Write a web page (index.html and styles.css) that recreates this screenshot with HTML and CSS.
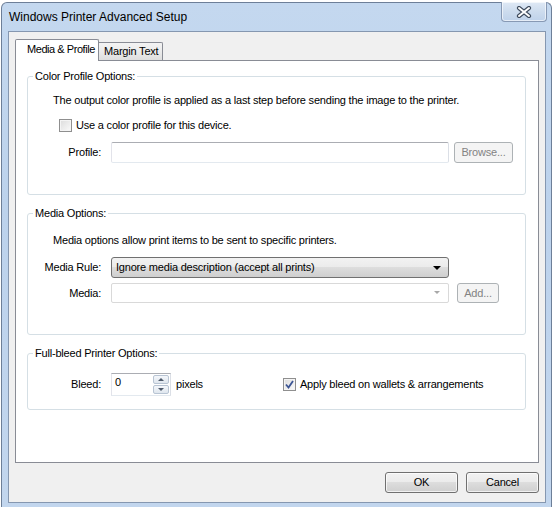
FILE: index.html
```html
<!DOCTYPE html>
<html>
<head>
<meta charset="utf-8">
<title>Windows Printer Advanced Setup</title>
<link rel="stylesheet" href="styles.css">
</head>
<body>
<div class="window">
  <div class="titlebar">
    <span class="title">Windows Printer Advanced Setup</span>
    <span class="close">
      <svg width="16" height="12" viewBox="0 0 16 12">
        <path d="M3 2 L13 10 M13 2 L3 10" stroke="#3d4a5c" stroke-width="4.2" stroke-linecap="round" fill="none"/>
        <path d="M3 2 L13 10 M13 2 L3 10" stroke="#ffffff" stroke-width="2" stroke-linecap="round" fill="none"/>
      </svg>
    </span>
  </div>
  <div class="client">
    <div class="tabs">
      <div class="tab active">Media &amp; Profile</div>
      <div class="tab">Margin Text</div>
    </div>
    <div class="panel">
      <section class="group g1">
        <div class="group-title">Color Profile Options:</div>
        <p class="desc">The output color profile is applied as a last step before sending the image to the printer.</p>
        <label class="check g1-check"><span class="box"></span>Use a color profile for this device.</label>
        <div class="row g1-row">
          <span class="lbl">Profile:</span>
          <span class="textbox"></span>
          <span class="btn disabled browse">Browse...</span>
        </div>
      </section>

      <section class="group g2">
        <div class="group-title">Media Options:</div>
        <p class="desc g2-desc">Media options allow print items to be sent to specific printers.</p>
        <div class="row g2-row1">
          <span class="lbl">Media Rule:</span>
          <span class="combo active-combo">Ignore media description (accept all prints)<span class="arrow"></span></span>
        </div>
        <div class="row g2-row2">
          <span class="lbl">Media:</span>
          <span class="combo disabled-combo"><span class="arrow"></span></span>
          <span class="btn disabled add">Add...</span>
        </div>
      </section>

      <section class="group g3">
        <div class="group-title">Full-bleed Printer Options:</div>
        <div class="row g3-row">
          <span class="lbl">Bleed:</span>
          <span class="spin">
            <span class="spin-val">0</span>
            <span class="spin-btns">
              <span class="spin-btn up"><span class="tri-up"></span></span>
              <span class="spin-btn down"><span class="tri-down"></span></span>
            </span>
          </span>
          <span class="unit">pixels</span>
          <label class="check bleed-check"><span class="box checked">
            <svg width="9" height="9" viewBox="0 0 9 9"><path d="M1 4.5 L3.5 7.5 L8 1" stroke="#3c5594" stroke-width="1.8" fill="none"/></svg>
          </span>Apply bleed on wallets &amp; arrangements</label>
        </div>
      </section>
    </div>
    <div class="buttons">
      <span class="btn push">OK</span>
      <span class="btn push">Cancel</span>
    </div>
  </div>
</div>
</body>
</html>
```

FILE: styles.css
```css
* { box-sizing: border-box; }
html, body { margin: 0; padding: 0; }
body {
  background: #ffffff;
  width: 554px;
  height: 507px;
  overflow: hidden;
  font-family: "Liberation Sans", Arial, sans-serif;
  font-size: 11px;
  letter-spacing: -0.2px;
  color: #000;
}
.window {
  margin: 2px 0 0 1px;
  width: 551px;
  height: 506px;
  border: 1px solid #6d7f98;
  border-bottom: none;
  border-radius: 6px 6px 0 0;
  background: linear-gradient(180deg, #c4d8ef 0%, #bcd2ec 40%, #c2d6ee 100%);
  padding: 0 5px 5px 6px;
  display: flex;
  flex-direction: column;
}
.titlebar {
  height: 28px;
  display: flex;
  align-items: flex-start;
  justify-content: space-between;
}
.title {
  font-family: "Liberation Sans", Arial, sans-serif;
  font-size: 12px;
  letter-spacing: 0;
  line-height: 14px;
  margin-top: 7px;
  margin-left: 1px;
  color: #000;
}
.close {
  margin-top: -1px;
  margin-right: -1px;
  width: 46px;
  height: 20px;
  border: 1px solid #8799b4;
  border-top: none;
  border-radius: 0 0 4px 4px;
  background: linear-gradient(180deg, #dfe9f5 0%, #cddcee 50%, #bfd2ea 100%);
  box-shadow: inset 0 0 0 1px rgba(255,255,255,0.6);
  display: flex;
  align-items: center;
  justify-content: center;
}
.client {
  flex: 1;
  border: 1px solid #8597b0;
  background: #f0f0f0;
  padding: 7px 6px 0 6px;
  display: flex;
  flex-direction: column;
}
.tabs {
  display: flex;
  align-items: flex-end;
  height: 21px;
}
.tab {
  border: 1px solid #898c95;
  border-bottom: none;
  line-height: 13px;
  white-space: nowrap;
}
.tab.active {
  width: 84px;
  height: 22px;
  margin-bottom: -1px;
  background: #ffffff;
  padding: 3px 0 0 11px;
  letter-spacing: -0.45px;
  position: relative;
  z-index: 1;
  border-radius: 2px 2px 0 0;
}
.tab:not(.active) {
  width: 64px;
  height: 18px;
  border-left: none;
  background: linear-gradient(180deg, #f3f3f3 0%, #ebebeb 50%, #dedede 100%);
  padding: 2px 0 0 5px;
  border-radius: 0 2px 0 0;
}
.panel {
  height: 403px;
  border: 1px solid #898c95;
  background: #ffffff;
  padding: 15px 12px 0 11px;
  display: flex;
  flex-direction: column;
  gap: 18px;
}
.group {
  border: 1px solid #d5dfe5;
  border-radius: 3px;
  display: flex;
  flex-direction: column;
}
.g1 { height: 119px; }
.g2 { height: 122px; }
.g3 { height: 57px; }
.group-title {
  align-self: flex-start;
  margin: -7px 0 0 5px;
  padding: 0 2px;
  background: #ffffff;
  line-height: 13px;
}
.desc {
  margin: 11px 0 0 25px;
  line-height: 13px;
}
.g2-desc { margin-top: 14px; }
.check {
  display: flex;
  align-items: center;
  line-height: 13px;
}
.g1-check { margin: 12px 0 0 31px; }
.box {
  width: 13px;
  height: 13px;
  border: 1px solid #8f8f8f;
  background: linear-gradient(135deg, #dcdcdc 0%, #eeeeee 60%, #fbfbfb 100%);
  box-shadow: inset 0 0 0 1px #f4f4f4;
  margin-right: 4px;
  display: flex;
  align-items: center;
  justify-content: center;
  flex: none;
}
.row {
  display: flex;
  align-items: center;
}
.lbl {
  width: 73px;
  text-align: right;
  margin-right: 10px;
  line-height: 13px;
  flex: none;
}
.g1-row { margin-top: 10px; }
.textbox {
  width: 338px;
  height: 21px;
  border: 1px solid #abadb3;
  border-color: #abadb3 #dbdfe6 #e3e9ef #e2e3ea;
  border-radius: 2px;
  background: #fff;
}
.btn {
  display: flex;
  align-items: center;
  justify-content: center;
  height: 21px;
  border-radius: 3px;
  line-height: 13px;
}
.btn.disabled {
  border: 1px solid #adb2b5;
  background: #f4f4f4;
  color: #838383;
}
.browse { width: 59px; margin-left: 5px; }
.add { width: 42px; margin-left: 8px; height: 20px; }
.g2-row1 { margin-top: 10px; }
.g2-row2 { margin-top: 5px; }
.combo {
  width: 338px;
  height: 21px;
  border-radius: 3px;
  position: relative;
  display: flex;
  align-items: center;
  padding-left: 4px;
  line-height: 13px;
}
.active-combo {
  border: 1px solid #707070;
  background: linear-gradient(180deg, #f2f2f2 0%, #ebebeb 49%, #dddddd 50%, #cfcfcf 100%);
}
.disabled-combo {
  height: 20px;
  border: 1px solid #d9d9d9;
  border-radius: 2px;
  background: #ffffff;
}
.arrow {
  position: absolute;
  right: 7px;
  top: 50%;
  margin-top: -2px;
  width: 0;
  height: 0;
  border-left: 4px solid transparent;
  border-right: 4px solid transparent;
  border-top: 4px solid #000;
}
.disabled-combo .arrow {
  border-top-color: #a8a8a8;
  border-left-width: 3px;
  border-right-width: 3px;
  border-top-width: 3px;
  right: 8px;
}
.g3-row { margin-top: 13px; }
.spin {
  width: 60px;
  height: 23px;
  border: 1px solid #abadb3;
  border-color: #abadb3 #dbdfe6 #e3e9ef #e2e3ea;
  background: #fff;
  display: flex;
}
.spin-val {
  flex: 1;
  padding: 2px 0 0 3px;
  line-height: 13px;
}
.spin-btns {
  width: 17px;
  display: flex;
  flex-direction: column;
  gap: 1px;
  padding: 1px 1px 1px 0;
}
.spin-btn {
  flex: 1;
  border: 1px solid #b8c4d3;
  border-radius: 2px;
  background: linear-gradient(180deg, #f4f7fb 0%, #dfe6ee 100%);
  display: flex;
  align-items: center;
  justify-content: center;
}
.tri-up {
  width: 0; height: 0;
  border-left: 3px solid transparent;
  border-right: 3px solid transparent;
  border-bottom: 3px solid #4e5a6b;
}
.tri-down {
  width: 0; height: 0;
  border-left: 3px solid transparent;
  border-right: 3px solid transparent;
  border-top: 3px solid #4e5a6b;
}
.unit { margin-left: 5px; line-height: 13px; }
.bleed-check { margin-left: 80px; }
.buttons {
  display: flex;
  justify-content: flex-end;
  gap: 8px;
  margin-top: 9px;
  padding-right: 0;
}
.btn.push {
  width: 73px;
  height: 21px;
  border: 1px solid #707070;
  background: linear-gradient(180deg, #f2f2f2 0%, #ebebeb 49%, #dddddd 50%, #cfcfcf 100%);
  box-shadow: inset 0 0 0 1px rgba(255,255,255,0.7);
}
```
